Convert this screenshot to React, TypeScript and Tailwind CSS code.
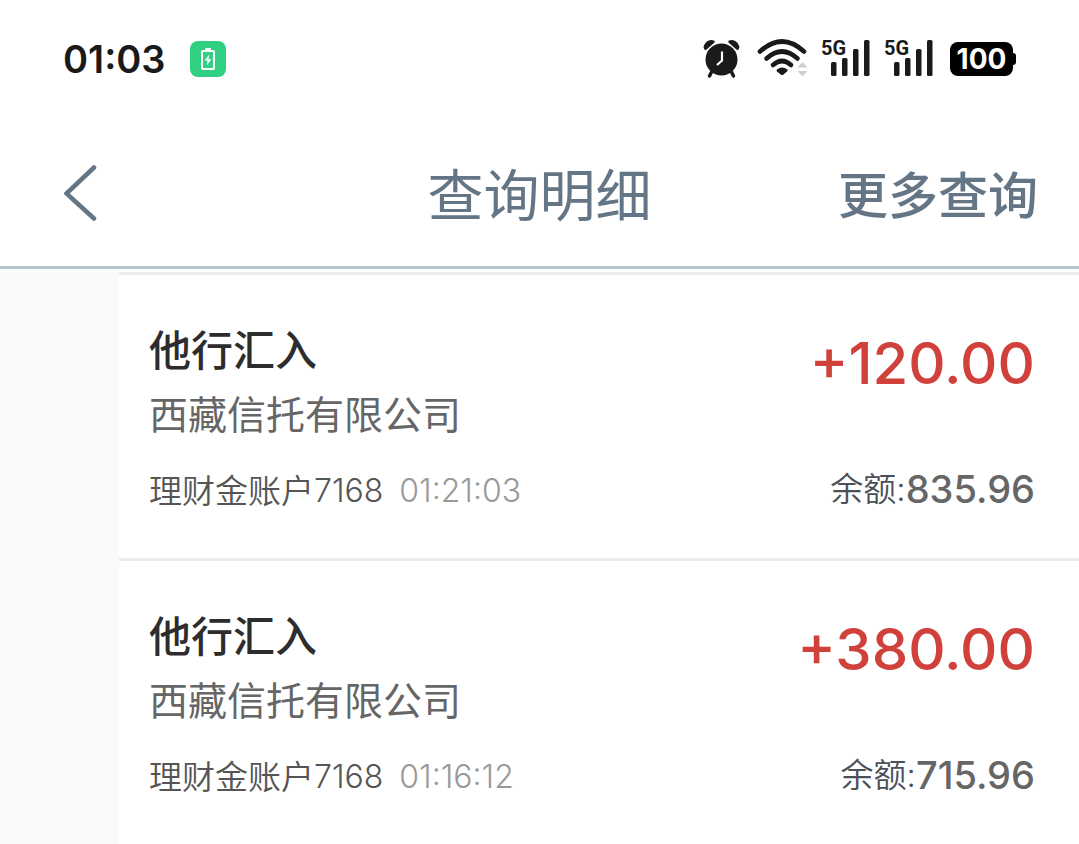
const transactions = [
  {
    title: '他行汇入',
    payer: '西藏信托有限公司',
    account: '理财金账户',
    accountTail: '7168',
    time: '01:21:03',
    amount: '+120.00',
    balance: '835.96',
  },
  {
    title: '他行汇入',
    payer: '西藏信托有限公司',
    account: '理财金账户',
    accountTail: '7168',
    time: '01:16:12',
    amount: '+380.00',
    balance: '715.96',
  },
];

function ChargingBadge() {
  return (
    <svg viewBox="0 0 36 36" className="size-9" aria-hidden="true">
      <rect width="36" height="36" rx="8" fill="#2fd082" />
      <rect x="15" y="7" width="6" height="3" rx="1" fill="#fff" />
      <rect x="12" y="10" width="12" height="18" rx="1" fill="none" stroke="#fff" strokeWidth="2" />
      <path d="M19.2 13.5 14.5 19.5h3l-.7 5 4.7-6.2h-3z" fill="#fff" />
    </svg>
  );
}

function AlarmIcon() {
  return (
    <svg viewBox="0 0 38 40" className="h-10 w-[38px]" aria-hidden="true">
      <g fill="#1a1a1a">
        <circle cx="18.5" cy="20.5" r="16" />
        <path d="M.6 8.6C.6 4 6 -1 11 1.600Q12.500 2.600 11 4L3.600 10.400Q1.200 12 .6 8.600ZM36.400 8.600C36.400 4 31 -1 26 1.600Q24.500 2.600 26 4L33.400 10.400Q35.800 12 36.400 8.600Z" />
      </g>
      <path d="m9 32-2.500 5M28 32l2.500 5" stroke="#1a1a1a" strokeWidth="3.5" strokeLinecap="round" />
      <path d="M19 12.500v9l-5 4.500" fill="none" stroke="#fff" strokeWidth="2.2" />
    </svg>
  );
}

function WifiIcon() {
  return (
    <svg viewBox="0 0 52 40" className="h-10 w-13" aria-hidden="true">
      <g fill="none" stroke="#1a1a1a" strokeWidth="4.6" strokeLinecap="round">
        <path d="M3 12.500Q25 -7.500 47 12.500" />
        <path d="M9.500 19.500Q25 5.500 40.500 19.500" />
        <path d="M16 26Q25 18 34 26" />
      </g>
      <path d="M20 30.500Q25 26.500 30.500 30.500Q31 31.500 30 32.500L26.500 35.500Q25 36.500 23.700 35.500L20 32.500Q19 31.500 20 30.500Z" fill="#1a1a1a" />
      <path d="m40.500 28.500 5-5.500 5 5.500zM40.500 32h10l-5 5.500z" fill="#cfcfcf" />
    </svg>
  );
}

function SignalIcon() {
  return (
    <svg viewBox="0 0 50 40" className="h-10 w-[50px] overflow-visible" aria-hidden="true">
      <text
        x="0"
        y="16"
        fontSize="20"
        fontWeight="700"
        fill="#1a1a1a"
        className="font-['Roboto',sans-serif]"
      >
        5G
      </text>
      <g fill="#1a1a1a">
        <rect x="10" y="23" width="5.5" height="14" rx="1.5" />
        <rect x="21" y="19" width="5.5" height="18" rx="1.5" />
        <rect x="32" y="10" width="5.5" height="27" rx="1.5" />
        <rect x="43" y="1" width="5.5" height="36" rx="1.5" />
      </g>
    </svg>
  );
}

function StatusBar() {
  return (
    <div className="flex h-[118px] items-center justify-between px-[63px] text-[#1a1a1a]">
      <div className="flex items-center gap-6">
        <span className="text-[38px] leading-none font-semibold">01:03</span>
        <ChargingBadge />
      </div>
      <div className="flex items-center">
        <AlarmIcon />
        <div className="ml-4 flex">
          <WifiIcon />
        </div>
        <div className="ml-3 flex gap-[13px]">
          <SignalIcon />
          <SignalIcon />
        </div>
        <div className="ml-4 flex items-center">
          <span className="flex h-[34px] w-[63px] items-center justify-center rounded-lg bg-black text-[28px] leading-none font-bold text-white">
            100
          </span>
          <span className="h-3 w-[3px] rounded-r-sm bg-black" />
        </div>
      </div>
    </div>
  );
}

function NavBar() {
  return (
    <header className="grid h-[151px] grid-cols-[1fr_auto_1fr] items-center border-b-3 border-[#b5c6c8] px-[41px] text-[#647685]">
      <button type="button" aria-label="返回" className="justify-self-start px-[23px]">
        <svg viewBox="0 0 34 58" className="h-[58px] w-[34px]" aria-hidden="true">
          <path d="M30 4.500 2.500 30.500l27.500 25" fill="none" stroke="#647685" strokeWidth="4.5" strokeLinecap="round" />
        </svg>
      </button>
      <h1 className="font-['Noto_Sans_CJK_SC',sans-serif] text-[56px] leading-none">查询明细</h1>
      <button
        type="button"
        className="justify-self-end font-['Noto_Sans_CJK_SC',sans-serif] text-[50px] leading-none font-medium"
      >
        更多查询
      </button>
    </header>
  );
}

function TransactionRow({ item }: { item: (typeof transactions)[number] }) {
  return (
    <li className="flex h-[286px] justify-between border-t-3 border-[#ececec] bg-white pt-12 pr-11 pl-[30px]">
      <div className="flex flex-col">
        <h2 className="text-[42px] leading-[56px] font-medium text-[#2d2d2d]">{item.title}</h2>
        <p className="mt-2 text-[39px] leading-[56px] text-[#666]">{item.payer}</p>
        <p className="mt-5 flex items-center leading-[56px] font-[350] text-[#555]">
          <span className="text-[33px]">{item.account}</span>
          <span className="text-[32px]">{item.accountTail}</span>
          <time className="ml-4 text-[32px] text-[#999]">{item.time}</time>
        </p>
      </div>
      <div className="flex flex-col items-end">
        <p className="pt-1 text-[58px] leading-[72px] font-medium text-[#cf413a]">{item.amount}</p>
        <p className="mt-[62px] flex items-center leading-[56px]">
          <span className="text-[33px] font-[350] text-[#4b5058]">余额:</span>
          <span className="text-[38px] font-medium text-[#666]">{item.balance}</span>
        </p>
      </div>
    </li>
  );
}

export default function App() {
  return (
    <div className="flex h-screen flex-col overflow-hidden bg-white font-['Inter','Noto_Sans_CJK_SC',sans-serif]">
      <StatusBar />
      <NavBar />
      <main className="flex-1 overflow-hidden bg-[#fafafa] pl-[119px]">
        <ul className="bg-white pt-[3px]">
          {transactions.map((item) => (
            <TransactionRow key={item.time} item={item} />
          ))}
        </ul>
      </main>
    </div>
  );
}
